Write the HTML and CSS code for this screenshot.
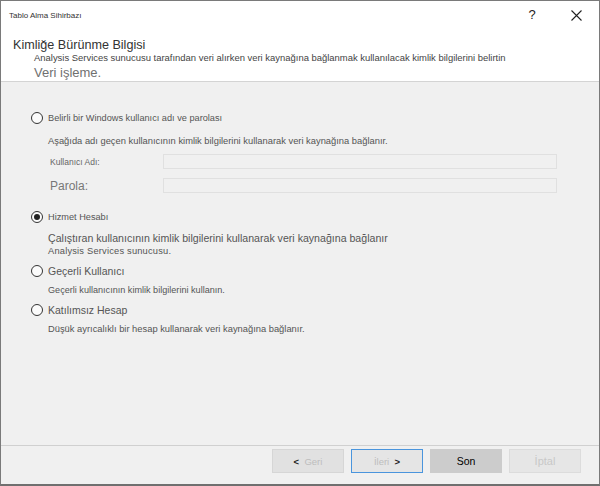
FILE: index.html
```html
<!DOCTYPE html>
<html lang="tr">
<head>
<meta charset="utf-8">
<title>Tablo Alma Sihirbazı</title>
<link rel="stylesheet" href="styles.css">
</head>
<body>
<div class="window">
  <div class="titlebar">
    <span class="title">Tablo Alma Sihirbazı</span>
    <span class="tb-btn help">?</span>
    <span class="tb-btn close">
      <svg width="11" height="11" viewBox="0 0 11 11"><path d="M0.5 0.5 L10.5 10.5 M10.5 0.5 L0.5 10.5" stroke="#222" stroke-width="1.1" fill="none"/></svg>
    </span>
  </div>
  <div class="header">
    <div class="h-title">Kimliğe Bürünme Bilgisi</div>
    <div class="h-sub">Analysis Services sunucusu tarafından veri alırken veri kaynağına bağlanmak kullanılacak kimlik bilgilerini belirtin</div>
    <div class="h-sub2">Veri işleme.</div>
  </div>
  <div class="content">
    <div class="opt opt1"><span class="radio"></span><span class="lbl small">Belirli bir Windows kullanıcı adı ve parolası</span></div>
    <div class="desc d1">Aşağıda adı geçen kullanıcının kimlik bilgilerini kullanarak veri kaynağına bağlanır.</div>
    <div class="field f1"><span class="flabel">Kullanıcı Adı:</span><span class="input"></span></div>
    <div class="field f2"><span class="flabel big">Parola:</span><span class="input"></span></div>
    <div class="opt opt2"><span class="radio checked"></span><span class="lbl small">Hizmet Hesabı</span></div>
    <div class="desc big d2a">Çalıştıran kullanıcının kimlik bilgilerini kullanarak veri kaynağına bağlanır</div>
    <div class="desc d2b">Analysis Services sunucusu.</div>
    <div class="opt opt3"><span class="radio"></span><span class="lbl large">Geçerli Kullanıcı</span></div>
    <div class="desc d3">Geçerli kullanıcının kimlik bilgilerini kullanın.</div>
    <div class="opt opt4"><span class="radio"></span><span class="lbl large">Katılımsız Hesap</span></div>
    <div class="desc d4">Düşük ayrıcalıklı bir hesap kullanarak veri kaynağına bağlanır.</div>
  </div>
  <div class="footer">
    <span class="btn disabled"><span class="arrow">&lt;</span>&nbsp; Geri</span>
    <span class="btn focused disabled">İleri&nbsp;&nbsp; <span class="arrow">&gt;</span></span>
    <span class="btn primary">Son</span>
    <span class="btn disabled cancel">İptal</span>
  </div>
</div>
</body>
</html>
```
FILE: styles.css
```css
* { box-sizing: border-box; }
html, body { margin: 0; padding: 0; background: #ffffff; }
body { font-family: "Liberation Sans", Arial, sans-serif; }

.window {
  width: 600px;
  height: 486px;
  border: 1px solid #7a7a7a;
  border-bottom: 2px solid #6f6f6f;
  display: flex;
  flex-direction: column;
  background: #f0f0f0;
}

.titlebar {
  height: 28px;
  flex: none;
  background: #ffffff;
  display: flex;
  align-items: center;
  padding-left: 8px;
  padding-right: 6px;
}
.title { font-size: 8px; color: #333; flex: 1; }
.tb-btn {
  width: 34px;
  height: 28px;
  display: flex;
  align-items: center;
  justify-content: center;
  color: #222;
}
.help { font-size: 13px; margin-right: 10px; padding-bottom: 2px; }

.header {
  height: 53px;
  flex: none;
  background: #ffffff;
  border-bottom: 1px solid #d4d4d4;
  padding: 9px 0 0 12px;
}
.h-title { font-size: 12.6px; line-height: 14px; color: #333; }
.h-sub { font-size: 9.45px; line-height: 11px; color: #444; padding-left: 21px; }
.h-sub2 { font-size: 13px; line-height: 15px; color: #707070; padding-left: 21px; margin-top: 2px; }

.content {
  flex: 1;
  padding: 28px 0 0 30px;
  color: #555;
}
.opt { display: flex; align-items: center; height: 16px; }
.radio {
  width: 12px;
  height: 12px;
  border-radius: 50%;
  border: 1.6px solid #333;
  background: #fbfbfb;
  margin-right: 5px;
  display: flex;
  align-items: center;
  justify-content: center;
  flex: none;
}
.radio.checked::after {
  content: "";
  width: 6px;
  height: 6px;
  border-radius: 50%;
  background: #222;
}
.lbl.small { font-size: 9.2px; color: #555; }
.lbl.large { font-size: 10.5px; color: #555; }

.desc { padding-left: 17px; font-size: 9.35px; line-height: 14px; color: #555; }
.desc.big { font-size: 10.6px; line-height: 13px; }
.d1 { margin-top: 8px; }
.d2a { margin-top: 7px; }
.d2b { line-height: 12px; font-size: 9.3px; letter-spacing: 0.2px; }
.d3 { margin-top: 4px; font-size: 9.1px; }
.d4 { margin-top: 4px; }
.opt2 { margin-top: 16px; }
.opt3 { margin-top: 6px; }
.opt4 { margin-top: 5px; }

.field { display: flex; align-items: center; height: 15px; padding-left: 19px; }
.f1 { margin-top: 6px; }
.f2 { margin-top: 9px; }
.flabel { width: 113px; font-size: 8.5px; color: #666; }
.flabel.big { font-size: 12px; color: #777; }
.input {
  width: 394px;
  height: 15px;
  border: 1px solid #e0e0e0;
  background: #f0f0f0;
}

.footer {
  height: 39px;
  flex: none;
  border-top: 1px solid #d0d0d0;
  display: flex;
  justify-content: flex-end;
  gap: 7px;
  padding: 3px 18px 0 0;
}
.btn {
  width: 72px;
  height: 24px;
  display: flex;
  align-items: center;
  justify-content: center;
  font-size: 9.5px;
  background: #e1e1e1;
  border: 1px solid #d6d6d6;
  color: #000;
}
.btn.disabled { color: #bdbdbd; }
.btn .arrow { color: #222; font-weight: bold; }
.btn.focused { border: 1.5px solid #4a95dd; background: #e5e5e5; }
.btn.primary { background: #cccccc; border-color: #cccccc; font-size: 10.5px; }
.btn.cancel { background: #e6e6e6; border-color: #dcdcdc; font-size: 11px; color: #c8c8c8; }
```
